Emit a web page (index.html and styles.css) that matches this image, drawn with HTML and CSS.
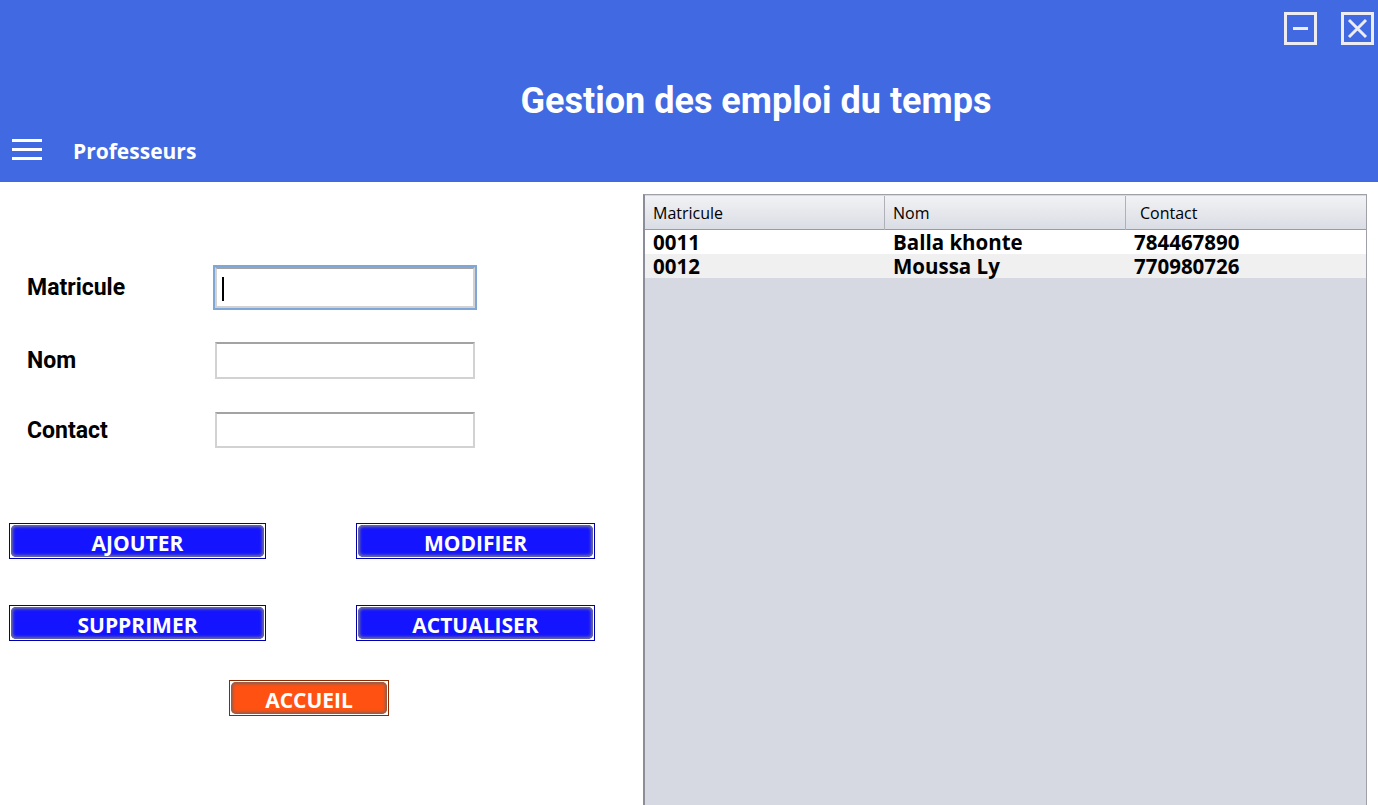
FILE: index.html
```html
<!DOCTYPE html>
<html lang="fr">
<head>
<meta charset="utf-8">
<title>Gestion des emploi du temps</title>
<link rel="stylesheet" href="styles.css">
</head>
<body>
<header class="topbar">
  <div class="controls">
    <span class="win-btn"><svg width="27" height="27" viewBox="0 0 27 27"><rect x="6" y="12" width="15" height="3" fill="#ececf2"/></svg></span>
    <span class="win-btn"><svg width="27" height="27" viewBox="0 0 27 27"><path d="M5 5 L22 22 M22 5 L5 22" stroke="#ececf2" stroke-width="3"/></svg></span>
  </div>
  <h1 class="title">Gestion des emploi du temps</h1>
  <nav class="nav">
    <span class="burger"><i></i><i></i><i></i></span>
    <span class="nav-label">Professeurs</span>
  </nav>
</header>
<main class="content">
  <section class="left">
    <div class="form">
      <div class="row r1">
        <label class="lbl">Matricule</label>
        <div class="input focused"><span class="caret"></span></div>
      </div>
      <div class="row r2">
        <label class="lbl">Nom</label>
        <div class="input"></div>
      </div>
      <div class="row r3">
        <label class="lbl">Contact</label>
        <div class="input"></div>
      </div>
    </div>
    <div class="buttons">
      <div class="btn-wrap w1"><button class="btn">AJOUTER</button></div>
      <div class="btn-wrap w2"><button class="btn">MODIFIER</button></div>
      <div class="btn-wrap w1"><button class="btn">SUPPRIMER</button></div>
      <div class="btn-wrap w2"><button class="btn">ACTUALISER</button></div>
    </div>
    <div class="home-wrap"><button class="btn home">ACCUEIL</button></div>
  </section>
  <section class="table">
    <div class="thead">
      <div class="th">Matricule</div>
      <div class="th">Nom</div>
      <div class="th c3">Contact</div>
    </div>
    <div class="tr">
      <div class="td">0011</div><div class="td">Balla khonte</div><div class="td">784467890</div>
    </div>
    <div class="tr alt">
      <div class="td">0012</div><div class="td">Moussa Ly</div><div class="td">770980726</div>
    </div>
  </section>
</main>
</body>
</html>
```
FILE: styles.css
```css
* { box-sizing: border-box; }
html, body { margin: 0; padding: 0; }
body {
  width: 1378px;
  height: 805px;
  overflow: hidden;
  background: #ffffff;
  font-family: Roboto, "Liberation Sans", sans-serif;
}
.topbar {
  height: 182px;
  background: #4169e1;
  position: relative;
}
.controls {
  position: absolute;
  top: 12px;
  right: 4px;
  display: flex;
  gap: 24px;
}
.win-btn {
  width: 33px;
  height: 33px;
  border: 3px solid #ececf2;
  display: block;
}
.win-btn svg { display: block; }
.title {
  margin: 0;
  padding: 80px 0 0 134px;
  text-align: center;
  color: #ffffff;
  font-family: Roboto, sans-serif;
  font-weight: 700;
  font-size: 36px;
  line-height: 42px;
  height: 122px;
}
.nav {
  display: flex;
  align-items: center;
  padding: 12px 0 0 12px;
}
.burger {
  display: flex;
  flex-direction: column;
  gap: 6px;
  width: 30px;
}
.burger i {
  display: block;
  height: 3px;
  background: #ffffff;
}
.nav-label {
  margin: 3px 0 0 31px;
  color: #ffffff;
  font-family: "Open Sans", sans-serif;
  font-weight: 700;
  font-size: 21px;
  line-height: 28px;
}
.content {
  display: grid;
  grid-template-columns: 643px 724px;
  padding-top: 12px;
}
.form {
  padding-top: 73px;
}
.row {
  display: flex;
  align-items: center;
}
.lbl {
  width: 215px;
  padding-left: 27px;
  font-family: Roboto, sans-serif;
  font-weight: 700;
  font-size: 23px;
  color: #000;
}
.input {
  width: 260px;
  background: #fff;
  border: 2px solid #d2d2d2;
  border-top-color: #a3a3a3;
  position: relative;
}
.r1 .input { height: 41px; }
.r2 { margin-top: 34px; }
.r2 .input { height: 37px; }
.r3 { margin-top: 33px; }
.r3 .input { height: 36px; }
.input.focused {
  box-shadow: 0 0 0 2px #7ea6d6;
}
.caret {
  position: absolute;
  left: 5px;
  top: 8px;
  width: 2px;
  height: 24px;
  background: #000;
}
.buttons {
  display: grid;
  grid-template-columns: 257px 239px;
  column-gap: 90px;
  row-gap: 46px;
  padding-left: 9px;
  margin-top: 75px;
}
.btn-wrap {
  height: 36px;
  border: 1px solid #0000a8;
  padding: 1px;
  background: #fff;
}
.btn {
  display: block;
  width: 100%;
  height: 100%;
  margin: 0;
  padding: 3px 0 0;
  border: none;
  border-radius: 5px;
  background: #1414ff;
  box-shadow: inset 0 0 3px 2px #6e6e9a;
  color: #ffffff;
  font-family: "Open Sans", sans-serif;
  font-weight: 700;
  font-size: 21px;
  line-height: 28px;
}
.home-wrap {
  margin: 39px 0 0 229px;
  width: 160px;
  height: 36px;
  border: 1px solid #8a2a00;
  padding: 1px;
}
.btn.home {
  background: #ff5212;
  box-shadow: inset 0 0 3px 2px #8c5e50;
}
.table {
  height: 640px;
  border: 1px solid #a0a0a8;
  border-left: 2px solid #8c8c9a;
  background: #d6d9e2;
}
.thead {
  display: grid;
  grid-template-columns: 240px 241px 1fr;
  height: 34px;
  background: linear-gradient(#f1f2f5, #dadde4);
  border-bottom: 1px solid #9a9aa4;
  margin-top: 1px;
}
.th {
  font-family: "Open Sans", sans-serif;
  font-size: 16px;
  color: #000;
  line-height: 34px;
  padding-left: 8px;
  border-right: 1px solid #b0b0b8;
}
.th.c3 { padding-left: 14px; border-right: none; }
.tr {
  display: grid;
  grid-template-columns: 240px 241px 1fr;
  height: 24px;
  background: #ffffff;
}
.tr.alt { background: #f0f0f0; }
.td {
  font-family: "Open Sans", sans-serif;
  font-weight: 700;
  font-size: 20.5px;
  line-height: 24px;
  padding-left: 8px;
  color: #000;
}
```
